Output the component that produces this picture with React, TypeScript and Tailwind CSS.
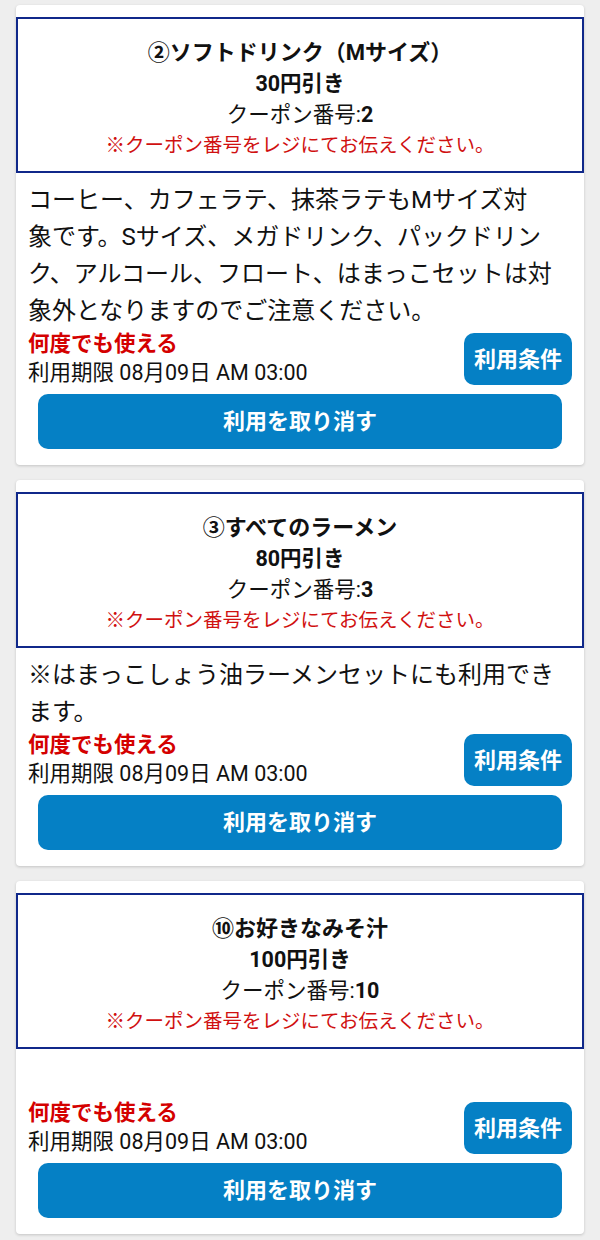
import React from 'react'

interface Coupon {
  title: string
  discount: string
  number: string
  // description lines as shown in the app (wrap points kept from the original)
  description: string[]
}

const coupons: Coupon[] = [
  {
    title: '②ソフトドリンク（Mサイズ）',
    discount: '30円引き',
    number: '2',
    description: [
      'コーヒー、カフェラテ、抹茶ラテもMサイズ対',
      '象です。Sサイズ、メガドリンク、パックドリン',
      'ク、アルコール、フロート、はまっこセットは対',
      '象外となりますのでご注意ください。',
    ],
  },
  {
    title: '③すべてのラーメン',
    discount: '80円引き',
    number: '3',
    description: ['※はまっこしょう油ラーメンセットにも利用できます。'],
  },
  {
    title: '⑩お好きなみそ汁',
    discount: '100円引き',
    number: '10',
    description: [],
  },
]

const CouponCard: React.FC<{ coupon: Coupon }> = ({ coupon }) => {
  return (
    <div className="bg-white rounded-[4px] shadow-[0_1px_3px_rgba(0,0,0,0.18)] pt-[12px] pb-[16px]">
      <div className="border-2 border-[#10288a] pt-[18px] pb-[10px] text-center text-[#111]">
        <p className="text-[22px] leading-[31px] font-bold">{coupon.title}</p>
        <p className="text-[21.5px] leading-[31px] font-bold">{coupon.discount}</p>
        <p className="text-[21.5px] leading-[31px]">
          クーポン番号:<span className="font-bold">{coupon.number}</span>
        </p>
        <p className="text-[19.5px] leading-[31px] text-[#d01010]">
          ※クーポン番号をレジにてお伝えください。
        </p>
      </div>
      <div className="px-3 pt-[9px]">
        <p className="text-[24px] leading-[37px] text-[#111] min-h-[41px]">
          {coupon.description.map((line, i) => (
            <React.Fragment key={i}>
              {i > 0 && <br />}
              {line}
            </React.Fragment>
          ))}
        </p>
        <div className="flex items-center justify-between">
          <div>
            <p className="text-[21.5px] leading-[28px] font-bold text-[#d40000]">何度でも使える</p>
            <p className="text-[21.5px] leading-[30px] text-[#111]">利用期限 08月09日 AM 03:00</p>
          </div>
          <button className="h-[52px] px-[10px] rounded-[10px] bg-[#0580c5] text-white text-[22px] font-bold">
            利用条件
          </button>
        </div>
        <button className="mt-[6px] mx-[10px] w-[calc(100%-20px)] h-[55px] rounded-[10px] bg-[#0580c5] text-white text-[22px] font-bold">
          利用を取り消す
        </button>
      </div>
    </div>
  )
}

export default function App() {
  return (
    <div
      className="min-h-[1240px] bg-[#eeeeee] px-4 pt-[5px] pb-4 flex flex-col gap-[15px]"
      style={{ fontFamily: 'Roboto, "Noto Sans CJK JP", sans-serif' }}
    >
      {coupons.map((c) => (
        <CouponCard key={c.number} coupon={c} />
      ))}
    </div>
  )
}
